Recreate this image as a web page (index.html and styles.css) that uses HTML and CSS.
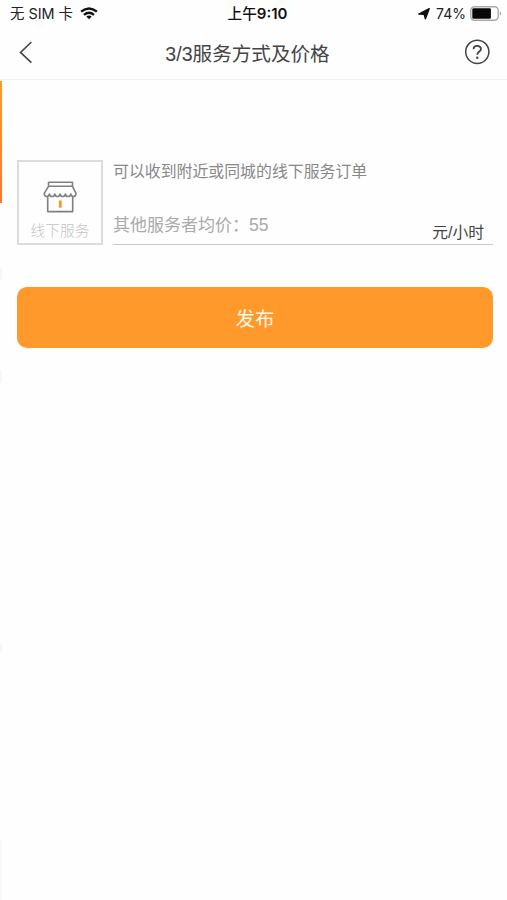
FILE: index.html
```html
<!DOCTYPE html>
<html lang="zh-CN">
<head>
<meta charset="utf-8">
<title>服务方式及价格</title>
<link rel="stylesheet" href="styles.css">
</head>
<body>
<div class="screen">
  <header class="top">
    <div class="status">
      <div class="carrier"><span>无 SIM 卡</span>
        <svg class="wifi" width="18" height="13" viewBox="0 0 18 13" fill="none" stroke="#111" stroke-width="2.4"><path d="M1.1 4.7Q9-1.9 16.9 4.7M4 7.9Q9 3.7 14 7.9"/><path d="M6.3 9.5Q9 7.5 11.7 9.5L9 12.3Z" fill="#111" stroke="none"/></svg>
      </div>
      <div class="clock">上午<span class="digits">9:10</span></div>
      <div class="power">
        <svg width="12" height="12" viewBox="0 0 12 12"><path d="M11.2.7 7.4 10.8 6.2 6.3.8 6.1Z" fill="#111" stroke="#111" stroke-width="1.4" stroke-linejoin="round"/></svg>
        <span class="percent">74%</span>
        <svg width="32" height="15" viewBox="0 0 32 15"><rect x=".8" y=".8" width="27.4" height="13.4" rx="3.6" fill="#fff" stroke="#aaa" stroke-width="1.4"/><rect x="2.3" y="2.3" width="18.6" height="10.4" rx="1.2" fill="#080808"/><path d="M29.8 5.2Q31.2 5.8 31.2 7.5T29.8 9.8Z" fill="#aaa"/></svg>
      </div>
    </div>
    <nav class="nav">
      <svg class="back" width="14" height="24" viewBox="0 0 14 24" fill="none" stroke="#444" stroke-width="1.6"><path d="M12.4 2 1.5 12.4 12.4 22.6"/></svg>
      <h1>3/3服务方式及价格</h1>
      <svg class="help" width="26" height="26" viewBox="0 0 26 26" fill="none" stroke="#444"><circle cx="13.3" cy="12.8" r="11.6" stroke-width="1.5"/><path d="M9.6 10.2C9.6 5.8 17 5.9 17 10 17 12.6 13.3 12.6 13.3 15.8" stroke-width="1.8"/><circle cx="13.3" cy="18.7" r="1.2" fill="#444" stroke="none"/></svg>
    </nav>
  </header>
  <main>
    <section class="service">
      <div class="type">
        <svg width="34" height="34" viewBox="0 0 34 34" fill="none" stroke="#808080" stroke-width="1.6" stroke-linejoin="round"><path d="M5.5 5.3V1.2H29.5V5.3M5.5 5.3H29.5L33 12.3C33 16.4 28.6 16.4 27.8 13 27 16.4 23.2 16.4 22.4 13 21.6 16.4 17.9 16.4 17.1 13 16.3 16.4 12.6 16.4 11.8 13 11 16.4 7.2 16.4 6.4 13 5.6 16.4 1.2 16.4 1.2 12.3ZM4.7 15.3V30.6H29.7V15.3"/><path d="M17.3 19.5V26.7" stroke="#f69a25" stroke-width="2.8"/></svg>
        <span>线下服务</span>
      </div>
      <div class="details">
        <p class="desc">可以收到附近或同城的线下服务订单</p>
        <div class="price"><span class="hint">其他服务者均价：<span class="amount">55</span></span><span class="unit">元/小时</span></div>
      </div>
    </section>
    <button class="publish">发布</button>
  </main>
  <div class="edge"></div>
</div>
</body>
</html>
```
FILE: styles.css
```css
* { box-sizing: border-box; }
body {
  margin: 0;
  background: #fefefe;
  color: #444;
  font-family: "Liberation Sans", "Noto Sans CJK SC", sans-serif;
}
svg { display: block; flex: none; }
.screen { position: relative; height: 900px; overflow: hidden; }
.top { height: 80px; border-bottom: 1px solid #f0f0f0; }
.status {
  display: grid;
  grid-template-columns: 1fr auto 1fr;
  align-items: center;
  height: 27px;
  padding: 0 5px 0 10px;
  color: #222;
  font-family: Inter, "Noto Sans CJK SC", sans-serif;
  font-size: 14.4px;
  line-height: 20px;
}
.carrier, .power { display: flex; align-items: center; }
.carrier { gap: 7px; white-space: pre; }
.clock { margin-left: 3px; font-size: 14.6px; font-weight: 500; color: #111; }
.digits { font-size: 15px; font-weight: 600; }
.power { justify-content: flex-end; }
.percent { margin: 0 4px 0 6px; font-size: 14px; }
.nav {
  display: grid;
  grid-template-columns: 1fr auto 1fr;
  align-items: center;
  height: 52px;
  padding: 0 17px 2px 19px;
}
.help { justify-self: end; }
h1 {
  margin: 0 14px 0 0;
  padding-top: 3px;
  font-size: 19.6px;
  font-weight: 400;
  line-height: 28px;
}
main { padding: 80px 14px 0 17px; }
.service { display: flex; gap: 10px; height: 85px; }
.type {
  display: flex;
  flex-direction: column;
  align-items: center;
  flex: none;
  width: 86px;
  border: 2px solid #dcdcdc;
  padding-top: 19px;
  color: #c4c4c4;
  font-size: 14.7px;
  line-height: 22px;
}
.type span { margin-top: 5px; font-weight: 300; }
.details {
  display: flex;
  flex: 1;
  flex-direction: column;
  justify-content: space-between;
  border-bottom: 1px solid #c8c8c8;
}
.desc { margin: 0; padding-top: 1px; color: #888; font-size: 15.9px; line-height: 22px; }
.price {
  display: flex;
  align-items: flex-end;
  justify-content: space-between;
  padding-right: 9px;
  line-height: 24px;
}
.hint { margin-bottom: 6px; color: #aaa; font-size: 17px; }
.amount { font-size: 17.6px; }
.unit { margin-bottom: -1px; color: #444; font-size: 15.8px; }
.publish {
  display: block;
  width: 100%;
  height: 61px;
  margin-top: 42px;
  padding: 0;
  border: 0;
  border-radius: 10px;
  background: #ff992b;
  color: #fff8e6;
  font: inherit;
  font-size: 19.4px;
}
.edge {
  position: absolute;
  left: 0;
  top: 81px;
  width: 2px;
  height: 819px;
  background:
    linear-gradient(#ff992b, #ff762e) 0 0 / 2px 122px no-repeat,
    linear-gradient(#f7f7f9, #f7f7f9) 0 187px / 2px 12px no-repeat,
    linear-gradient(#f7f7f9, #f7f7f9) 0 290px / 2px 12px no-repeat,
    linear-gradient(#f7f7f9, #f7f7f9) 0 563px / 2px 8px no-repeat,
    linear-gradient(#f7f8fa, #f7f8fa) 0 759px / 2px 60px no-repeat;
}
```
